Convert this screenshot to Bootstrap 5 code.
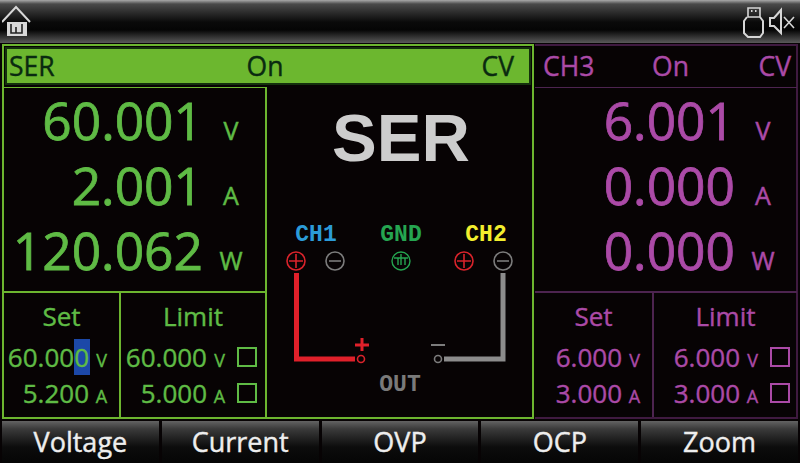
<!DOCTYPE html>
<html lang="en"><head><meta charset="utf-8"><title>Power supply display</title>
<link href="https://cdn.jsdelivr.net/npm/bootstrap@5.3.0/dist/css/bootstrap.min.css" rel="stylesheet">
<style>
html,body{margin:0;width:800px;height:463px;overflow:hidden;background:#070304;font-family:"Open Sans",sans-serif}
.screen{width:800px;height:463px}
.topbar{height:43px;background:linear-gradient(#a9a9a9 0,#4a4a4a 4px,#0a0a0a 22px,#050505 30px,#5a5a5a 43px);padding:2px 1px 0 2px}
.work{height:376px;padding:1px 2px 0 2px;gap:1px}
.chan{flex:0 0 auto;display:flex;flex-direction:column}
.ser{width:532px;border:2px solid #6cb52f;color:#5fbb45;--line:#6cb52f}
.ch3{width:263px;border:2px solid #3f1a40;border-left:0;color:#ab4aa7;--line:#4d2450}
.head{height:38px;padding:0 17px 0 4px;font-size:26.500px;line-height:38px;flex:0 0 38px;-webkit-text-stroke:.4px currentColor}
.head span{flex:1 1 0}
.head span:nth-child(2){text-align:center}
.head span:nth-child(3){text-align:right}
.ser .head span:nth-child(2){padding-left:7px}
.ch3 .head span:nth-child(2){padding-left:7px}
.ser .head{background:#6cb72f;color:#0a2a10;box-shadow:inset 0 0 0 2px #14300c;margin:1px 1px 2px}
.ch3 .head{color:#ab4aa7;padding:0 4px 0 7px;margin:1px 1px 2px}
.body-row{flex:1;min-height:0}
.left-col{width:263px;flex:0 0 263px;border-top:1px solid var(--line);border-right:2px solid var(--line);display:flex;flex-direction:column}
.ch3 .left-col{width:262px;flex:0 0 262px;border-right:0}
.reads{height:205px;flex:0 0 205px;border-bottom:2px solid var(--line)}
.read{height:65px;display:flex;justify-content:flex-end;align-items:baseline;line-height:65px;font-size:51.500px;padding-right:6px;-webkit-text-stroke:.8px currentColor}
.read i{font-style:normal;font-size:25px;width:56px;text-align:center;line-height:1;-webkit-text-stroke:.5px currentColor}
.sets{flex:1;display:flex;min-height:0}
.setc{flex:1 1 50%;text-align:center;padding-top:5px}
.setc+.setc{border-left:2px solid var(--line)}
.setc.sl{flex:0 0 115px}
.ch3 .setc.sl{flex:0 0 117px}
.setc h6{font-size:26px;font-weight:400;color:inherit;margin:0 0 5px;line-height:36px;-webkit-text-stroke:.4px currentColor}
.sr{display:flex;justify-content:flex-end;align-items:baseline;font-size:26px;line-height:36px;height:36px;white-space:nowrap;padding-right:11px;-webkit-text-stroke:.4px currentColor}
.sr i{font-style:normal;font-size:18px;margin-left:6px;width:13px;text-align:center}
.lim .sr{padding-right:8px}
.ch3 .lim .sr{padding-right:7px}
.box{display:inline-block;width:20px;height:20px;border:2px solid currentColor;margin-left:11px;align-self:center}
.cur{background:#1c48a8;display:inline-block;line-height:36px;padding-right:1px;margin-right:-1px}
.diagram{flex:1;min-width:0;display:flex;align-items:flex-start}
.softkeys{height:44px;padding:2px 2px 0 2px;gap:3px}
.softkeys .btn{flex:1 1 0;border:0;border-radius:0;padding:0;color:#eee;font-size:27px;line-height:38px;height:42px;-webkit-text-stroke:.4px currentColor;background:linear-gradient(#636363 0,#3a3a3a 8px,#0c0c0c 26px,#050505 42px)}
svg{display:block}
</style></head>
<body>
<div class="screen d-flex flex-column">
  <div class="topbar d-flex justify-content-between">
    <svg width="32" height="36" viewBox="0 0 32 36" fill="none" stroke="#d8d8d8"><path d="M0 20 14 5 28 20" stroke-width="2"/><rect x="5" y="20" width="20" height="14" fill="#d8d8d8" stroke="none"/><path d="M9 22v9h5v-6M14 31h6v-9" stroke="#222" stroke-width="1.600"/></svg>
    <svg width="58" height="36" viewBox="0 0 58 36" fill="none" stroke="#d6d6d6"><path d="M7 6h12v9H7z" stroke-width="1.600"/><path d="M10 9h1.500M14 9h1.500" stroke-width="2"/><path d="M6 15 3 19v12l4 4h12l3-4V19l-3-4" stroke-width="2"/><path d="M29 16h4l7-8v23l-7-7h-4z" stroke-width="2"/><path d="M43 15l10 11M53 15 43 26" stroke-width="1.600"/></svg>
  </div>
  <div class="work d-flex">
    <section class="chan ser">
      <div class="head d-flex"><span>SER</span><span>On</span><span>CV</span></div>
      <div class="body-row d-flex">
        <div class="left-col">
          <div class="reads">
            <div class="read">60.001<i>V</i></div>
            <div class="read">2.001<i>A</i></div>
            <div class="read">120.062<i>W</i></div>
          </div>
          <div class="sets">
            <div class="setc sl"><h6>Set</h6>
              <div class="sr"><span>60.00<span class="cur">0</span></span><i>V</i></div>
              <div class="sr"><span>5.200</span><i>A</i></div>
            </div>
            <div class="setc lim"><h6>Limit</h6>
              <div class="sr"><span>60.000</span><i>V</i><b class="box"></b></div>
              <div class="sr"><span>5.000</span><i>A</i><b class="box"></b></div>
            </div>
          </div>
        </div>
        <div class="diagram">
          <svg width="264" height="330" viewBox="267 88 264 330" fill="none">
            <text x="401" y="162" text-anchor="middle" font-family="Liberation Sans" font-weight="700" font-size="67" fill="#cdcdcd">SER</text>
            <g font-family="Liberation Mono" font-weight="700" font-size="23" text-anchor="middle">
              <text x="316" y="242" fill="#2b9bd8">CH1</text>
              <text x="401" y="242" fill="#25a550">GND</text>
              <text x="486" y="242" fill="#f2ee2e">CH2</text>
            </g>
            <text x="400" y="392" text-anchor="middle" font-family="Liberation Mono" font-weight="700" font-size="23" fill="#7a7a7a">OUT</text>
            <g stroke="#d9232b" stroke-width="1.600"><circle cx="296" cy="262" r="9"/><path d="M296 255v14M289 262h14"/><circle cx="464" cy="262" r="9"/><path d="M464 255v14M457 262h14"/><circle cx="361" cy="360" r="3.500"/></g>
            <g stroke="#7c7c7c" stroke-width="1.600"><circle cx="335" cy="262" r="9"/><path d="M329 262h12"/><circle cx="503" cy="262" r="9"/><path d="M497 262h12"/><circle cx="438" cy="360" r="3.500"/></g>
            <g stroke="#25a550" stroke-width="1.400"><circle cx="401" cy="262" r="9"/><path d="M394 259h14M398 259v7M401 255v11M405 259v7"/></g>
            <path d="M296.500 274V360H355" stroke="#e0202a" stroke-width="5"/>
            <path d="M503 274V360H444" stroke="#8c8c8c" stroke-width="5"/>
            <path d="M362 339v13M355 346h14" stroke="#e0202a" stroke-width="3"/>
            <path d="M431 346h14" stroke="#7c7c7c" stroke-width="2"/>
          </svg>
        </div>
      </div>
    </section>
    <section class="chan ch3">
      <div class="head d-flex"><span>CH3</span><span>On</span><span>CV</span></div>
      <div class="body-row d-flex">
        <div class="left-col">
          <div class="reads">
            <div class="read">6.001<i>V</i></div>
            <div class="read">0.000<i>A</i></div>
            <div class="read">0.000<i>W</i></div>
          </div>
          <div class="sets">
            <div class="setc sl"><h6>Set</h6>
              <div class="sr"><span>6.000</span><i>V</i></div>
              <div class="sr"><span>3.000</span><i>A</i></div>
            </div>
            <div class="setc lim"><h6>Limit</h6>
              <div class="sr"><span>6.000</span><i>V</i><b class="box"></b></div>
              <div class="sr"><span>3.000</span><i>A</i><b class="box"></b></div>
            </div>
          </div>
        </div>
      </div>
    </section>
  </div>
  <div class="softkeys d-flex">
    <button class="btn" type="button">Voltage</button>
    <button class="btn" type="button">Current</button>
    <button class="btn" type="button">OVP</button>
    <button class="btn" type="button">OCP</button>
    <button class="btn" type="button">Zoom</button>
  </div>
</div>
</body></html>
